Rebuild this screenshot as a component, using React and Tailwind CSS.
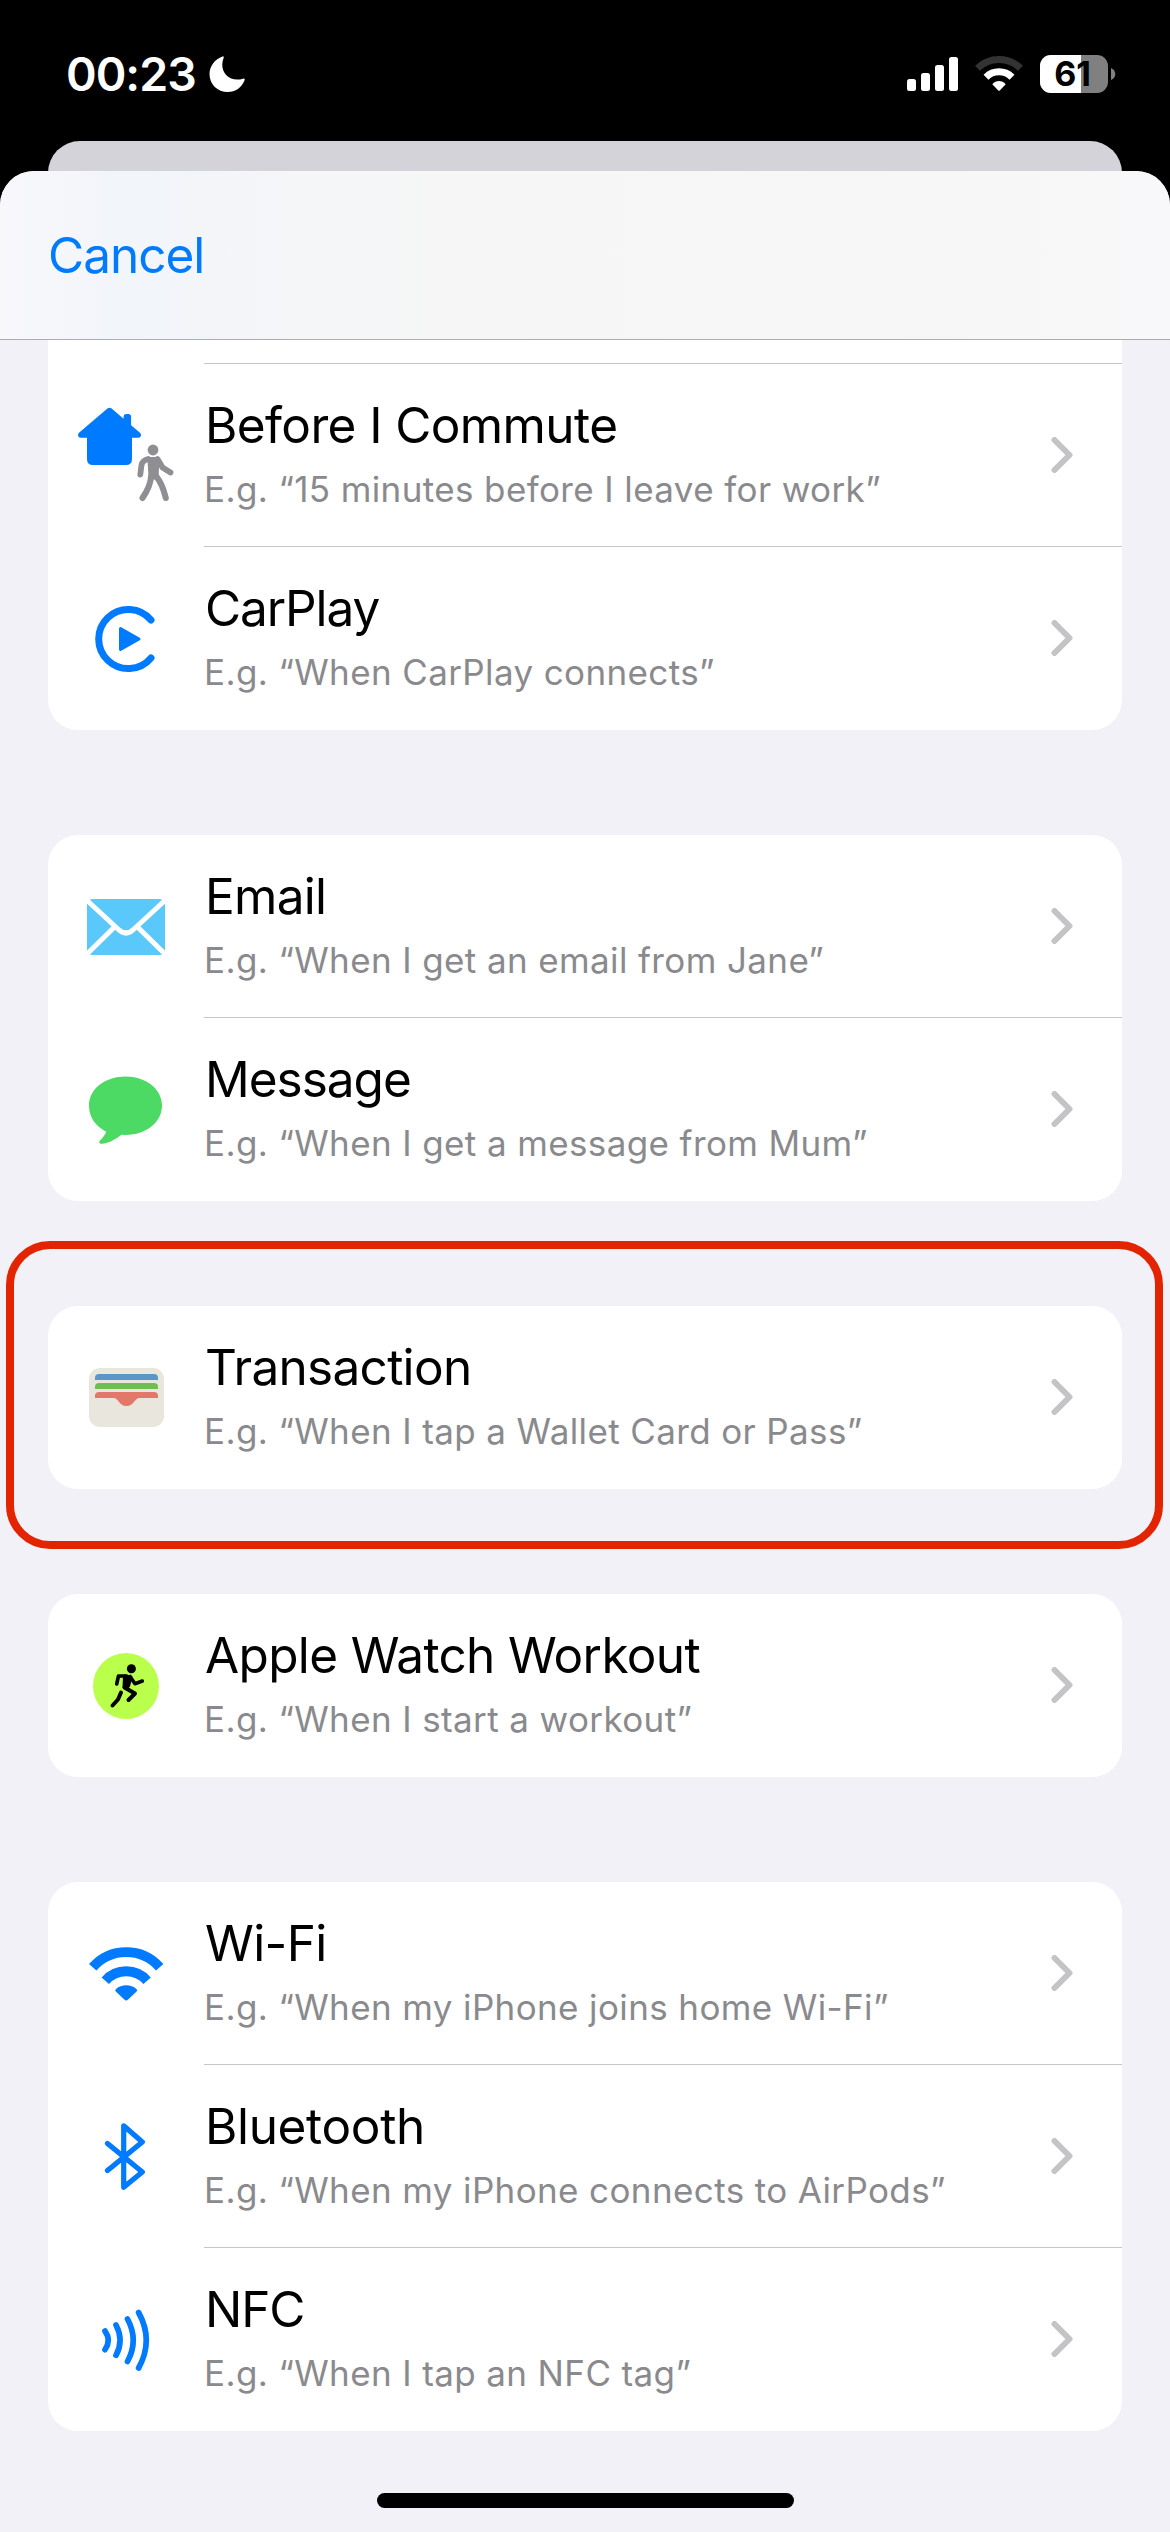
function Chevron() {
  return (
    <svg className="ml-auto mr-[49px] h-9 w-[22px] shrink-0" viewBox="0 0 22 36" fill="none">
      <path d="M3.5 3 L18.5 18 L3.5 33" stroke="#c4c4c6" strokeWidth="6" strokeLinecap="round" strokeLinejoin="round" />
    </svg>
  );
}

function CommuteIcon() {
  return (
    <>
      <path d="M59.4 44.600 Q61.500 42.900 63.600 44.600 L75.600 54.800 V52.500 Q75.600 50 78 50 H80.700 Q83.100 50 83.100 52.500 V61.300 L92 68.800 Q93.600 70.400 92.800 72.200 Q92 73.800 90 73.800 H84 V95 Q84 101 78 101 H45 Q39 101 39 95 V73.800 H33 Q31 73.800 30.200 72.200 Q29.400 70.400 31 68.800 Z" fill="#007aff" />
      <g stroke="#8e8e93" fill="none" strokeLinecap="round" strokeLinejoin="round">
        <circle cx="105" cy="86" r="5.400" fill="#8e8e93" stroke="none" />
        <path d="M100 95 Q94.500 96.500 93.500 101 L92.300 110.500" strokeWidth="5.800" />
        <path d="M109.500 95 L114.500 103.500 L122.500 108.500" strokeWidth="5.800" />
        <path d="M102 95.500 H109 L108 113 H103 Z" fill="#8e8e93" strokeWidth="5" />
        <path d="M103 113 Q102.500 122 94.500 134" strokeWidth="6" />
        <path d="M108 112 Q114.500 120 117.800 134" strokeWidth="6" />
      </g>
    </>
  );
}

function CarPlayIcon() {
  return (
    <>
      <path d="M103 73 A29.600 29.600 0 1 0 103 111" fill="none" stroke="#007aff" strokeWidth="7" strokeLinecap="round" />
      <path d="M72.500 81.500 L91 92 L72.500 102.500 Z" fill="#007aff" stroke="#007aff" strokeWidth="3" strokeLinejoin="round" />
    </>
  );
}

function EmailIcon() {
  return (
    <>
      <rect x="39" y="64" width="78" height="56" rx="5.500" fill="#5ac8fa" />
      <path d="M38 64.500 L70.500 94.500 Q78 101.500 85.500 94.500 L118 64.500 M38 120 L67 91.500 M118 120 L89 91.500" fill="none" stroke="#fff" strokeWidth="5" />
    </>
  );
}

function MessageIcon() {
  return (
    <path d="M77.500 58.500 C98 58.500 114 71 114 87.600 C114 104.500 98 117 77.500 117 L73.500 116.800 C68 121 61 125.500 53.500 125.800 Q50.500 125.600 51.500 122.900 C54 120.500 57 117.500 58.200 113.800 C48 108.500 41 100 41 87.600 C41 71 57 58.500 77.500 58.500 Z" fill="#4cd964" />
  );
}

function WalletIcon() {
  return (
    <>
      <rect x="41" y="62" width="75" height="59" rx="11" fill="#e9e6dd" />
      <path d="M47 74 V72 Q47 68 51 68 H106 Q110 68 110 72 V74 Z" fill="#5a96c8" />
      <path d="M47 83 V81 Q47 77 51 77 H106 Q110 77 110 81 V83 Z" fill="#6ebe50" />
      <path d="M47 92 V90 Q47 86 51 86 H106 Q110 86 110 90 V92 H91.500 C86.500 92 86 100 78.500 100 C71 100 70.500 92 65.500 92 Z" fill="#e17869" />
    </>
  );
}

function WorkoutIcon() {
  return (
    <>
      <circle cx="78" cy="92" r="33" fill="#b9ff4b" />
      <circle cx="83.400" cy="74.700" r="4.500" fill="#000" />
      <g fill="none" stroke="#000" strokeLinecap="round" strokeLinejoin="round">
        <path d="M78.500 82 H70.500 L68.700 90" strokeWidth="3.600" />
        <path d="M82 82.500 L87 89.700 L94.300 87" strokeWidth="3.600" />
        <path d="M77 82.500 L82.500 83.500 L80 92 L76.500 93 Z" strokeWidth="4" fill="#000" />
        <path d="M76.500 93.500 L87 99.500 L80.500 106" strokeWidth="4" />
        <path d="M73 98.500 L70 105.500 L64.500 111.500" strokeWidth="4" />
      </g>
    </>
  );
}

function WifiIcon() {
  return (
    <>
      <g fill="none" stroke="#007aff" strokeWidth="9.800">
        <path d="M44.700 85.300 A44.500 44.500 0 0 1 111.700 85.300" />
        <path d="M57.300 98.700 A27.800 27.800 0 0 1 99.100 98.700" />
      </g>
      <path d="M67.800 109.500 Q66.500 108 68 107 C73.500 102 83 102 88.400 107 Q89.900 108 88.600 109.500 L80.100 117.600 Q78.200 119.400 76.300 117.600 Z" fill="#007aff" />
    </>
  );
}

function BluetoothIcon() {
  return (
    <path d="M59.500 78.500 L94.300 107 L75.700 122.300 V60.800 L94.300 77 L59.500 105.500" fill="none" stroke="#007aff" strokeWidth="5.200" strokeLinecap="round" strokeLinejoin="round" />
  );
}

function NfcIcon() {
  return (
    <g fill="none" stroke="#007aff" strokeWidth="5.700" strokeLinecap="round">
      <path d="M57 83 Q63.600 92.300 57 101.700" />
      <path d="M68 77 Q76.200 92.300 68 107.300" />
      <path d="M79.500 71 Q91 92.300 79.500 113.500" />
      <path d="M90.600 64.500 Q106 92.300 90.600 120" />
    </g>
  );
}

const groups = [
  [
    { title: "Before I Commute", tt: "tracking-[-0.6px]", text: "E.g. “15 minutes before I leave for work”", Icon: CommuteIcon },
    { title: "CarPlay", tt: "tracking-[-1.1px]", text: "E.g. “When CarPlay connects”", Icon: CarPlayIcon },
  ],
  [
    { title: "Email", tt: "tracking-[-0.7px]", text: "E.g. “When I get an email from Jane”", Icon: EmailIcon },
    { title: "Message", tt: "tracking-[-1px]", text: "E.g. “When I get a message from Mum”", Icon: MessageIcon },
  ],
  [{ title: "Transaction", tt: "tracking-[-0.7px]", text: "E.g. “When I tap a Wallet Card or Pass”", Icon: WalletIcon, marked: true }],
  [{ title: "Apple Watch Workout", tt: "tracking-[-0.65px]", text: "E.g. “When I start a workout”", Icon: WorkoutIcon }],
  [
    { title: "Wi-Fi", tt: "tracking-[-0.6px]", text: "E.g. “When my iPhone joins home Wi-Fi”", Icon: WifiIcon },
    { title: "Bluetooth", tt: "tracking-[-0.35px]", text: "E.g. “When my iPhone connects to AirPods”", Icon: BluetoothIcon },
    { title: "NFC", tt: "tracking-[-1.1px]", text: "E.g. “When I tap an NFC tag”", Icon: NfcIcon },
  ],
];

function Row({ item, last }) {
  const { Icon } = item;
  return (
    <div className="flex h-[183px]">
      <svg className="h-[183px] w-[156px] shrink-0" viewBox="0 0 156 183">
        <Icon />
      </svg>
      <div className={`flex flex-1 items-center border-b ${last ? "border-transparent" : "border-[#c6c6c8]"}`}>
        <div className="whitespace-nowrap pb-[2px]">
          <div className={`pl-px text-[49.5px] leading-[60px] text-black ${item.tt}`}>{item.title}</div>
          <div className="mt-[10px] text-[35px] leading-[48px] tracking-[0.38px] text-[#8a8a8e]">{item.text}</div>
        </div>
        <Chevron />
      </div>
    </div>
  );
}

function StatusBar() {
  return (
    <div className="flex h-[141px] items-start justify-between pl-[66px] pr-[54px] pt-[50px]">
      <div className="flex h-12 items-center text-white">
        <span className="text-[46.5px] font-semibold leading-[48px] tracking-[-1px]">00:23</span>
        <svg className="ml-[13px] h-9 w-9" viewBox="0 0 36 36">
          <path d="M13.500 0.400 Q15 0 14.700 1.800 C9.500 14 19 27 34 22.700 Q36.300 22.200 35.500 24.500 C32.500 31.500 26.500 36 18.800 36 C8.500 36 0.500 28.500 0.500 18 C0.500 10 6 3 13.500 0.400 Z" fill="#fff" />
        </svg>
      </div>
      <svg className="h-12 w-[210px]" viewBox="906 50 210 48">
        <g fill="#fff">
          <rect x="907" y="79" width="9" height="12" rx="2.500" />
          <rect x="921" y="73" width="9" height="18" rx="2.500" />
          <rect x="935" y="65" width="9" height="26" rx="2.500" />
          <rect x="949" y="57" width="9" height="34" rx="2.500" />
        </g>
        <g fill="none" strokeWidth="7">
          <path d="M977.500 68.200 A31 31 0 0 1 1020.500 68.200" stroke="#333" />
          <path d="M986 77.200 A18.500 18.500 0 0 1 1012 77.200" stroke="#fff" />
        </g>
        <path d="M992.300 84.200 C996 80 1002 80 1005.700 84.200 L1000 90.300 Q999 91.300 998 90.300 Z" fill="#fff" />
        <clipPath id="level"><rect x="1040" y="55" width="68" height="38" rx="11" /></clipPath>
        <g clipPath="url(#level)">
          <rect x="1040" y="55" width="68" height="38" fill="#808080" />
          <rect x="1040" y="55" width="41" height="38" fill="#fff" />
        </g>
        <path d="M1111 68 Q1115.300 70 1115.300 74 Q1115.300 78 1111 80 Z" fill="#808080" />
        <text x="1072.500" y="86" textAnchor="middle" fontSize="34" fontWeight="650" fill="#000">61</text>
      </svg>
    </div>
  );
}

export default function App() {
  return (
    <div className="relative flex h-[2532px] w-[1170px] flex-col overflow-hidden bg-black font-[Inter,sans-serif]">
      <StatusBar />
      <div className="mx-12 h-[70px] shrink-0 rounded-t-[32px] bg-[#d4d3d9]" />
      <div className="relative -mt-10 flex flex-1 flex-col overflow-hidden rounded-t-[34px] bg-[#f2f1f7]">
        <header className="flex h-[169px] shrink-0 items-center border-b border-[#adadb1] bg-[linear-gradient(90deg,#f8f8fb_0%,#f2f5fa_10%,#f4f6f8_25%,#f6f6f6_40%,#f7f7f7_80%,#f8f8fa_100%)] pl-12">
          <button className="text-[49.5px] leading-[60px] tracking-[-1px] text-[#007aff]">Cancel</button>
        </header>
        <main className="mx-12 flex flex-col">
          <div className="h-6 bg-white pl-[156px]">
            <div className="h-6 border-b border-[#c6c6c8]" />
          </div>
          <div className="flex flex-col gap-[105px]">
            {groups.map((items, g) => (
              <section key={items[0].title} className={g === 0 ? "rounded-b-[30px] bg-white" : "relative rounded-[30px] bg-white"}>
                {items.map((item, i) => (
                  <Row key={item.title} item={item} last={i === items.length - 1} />
                ))}
                {items[0].marked && (
                  <div className="absolute -bottom-[60px] -left-[42px] -right-[41px] -top-[65px] rounded-[44px] border-8 border-[#e22400]" />
                )}
              </section>
            ))}
          </div>
        </main>
        <div className="mx-auto mb-6 mt-auto h-[15px] w-[417px] rounded-full bg-black" />
      </div>
    </div>
  );
}
